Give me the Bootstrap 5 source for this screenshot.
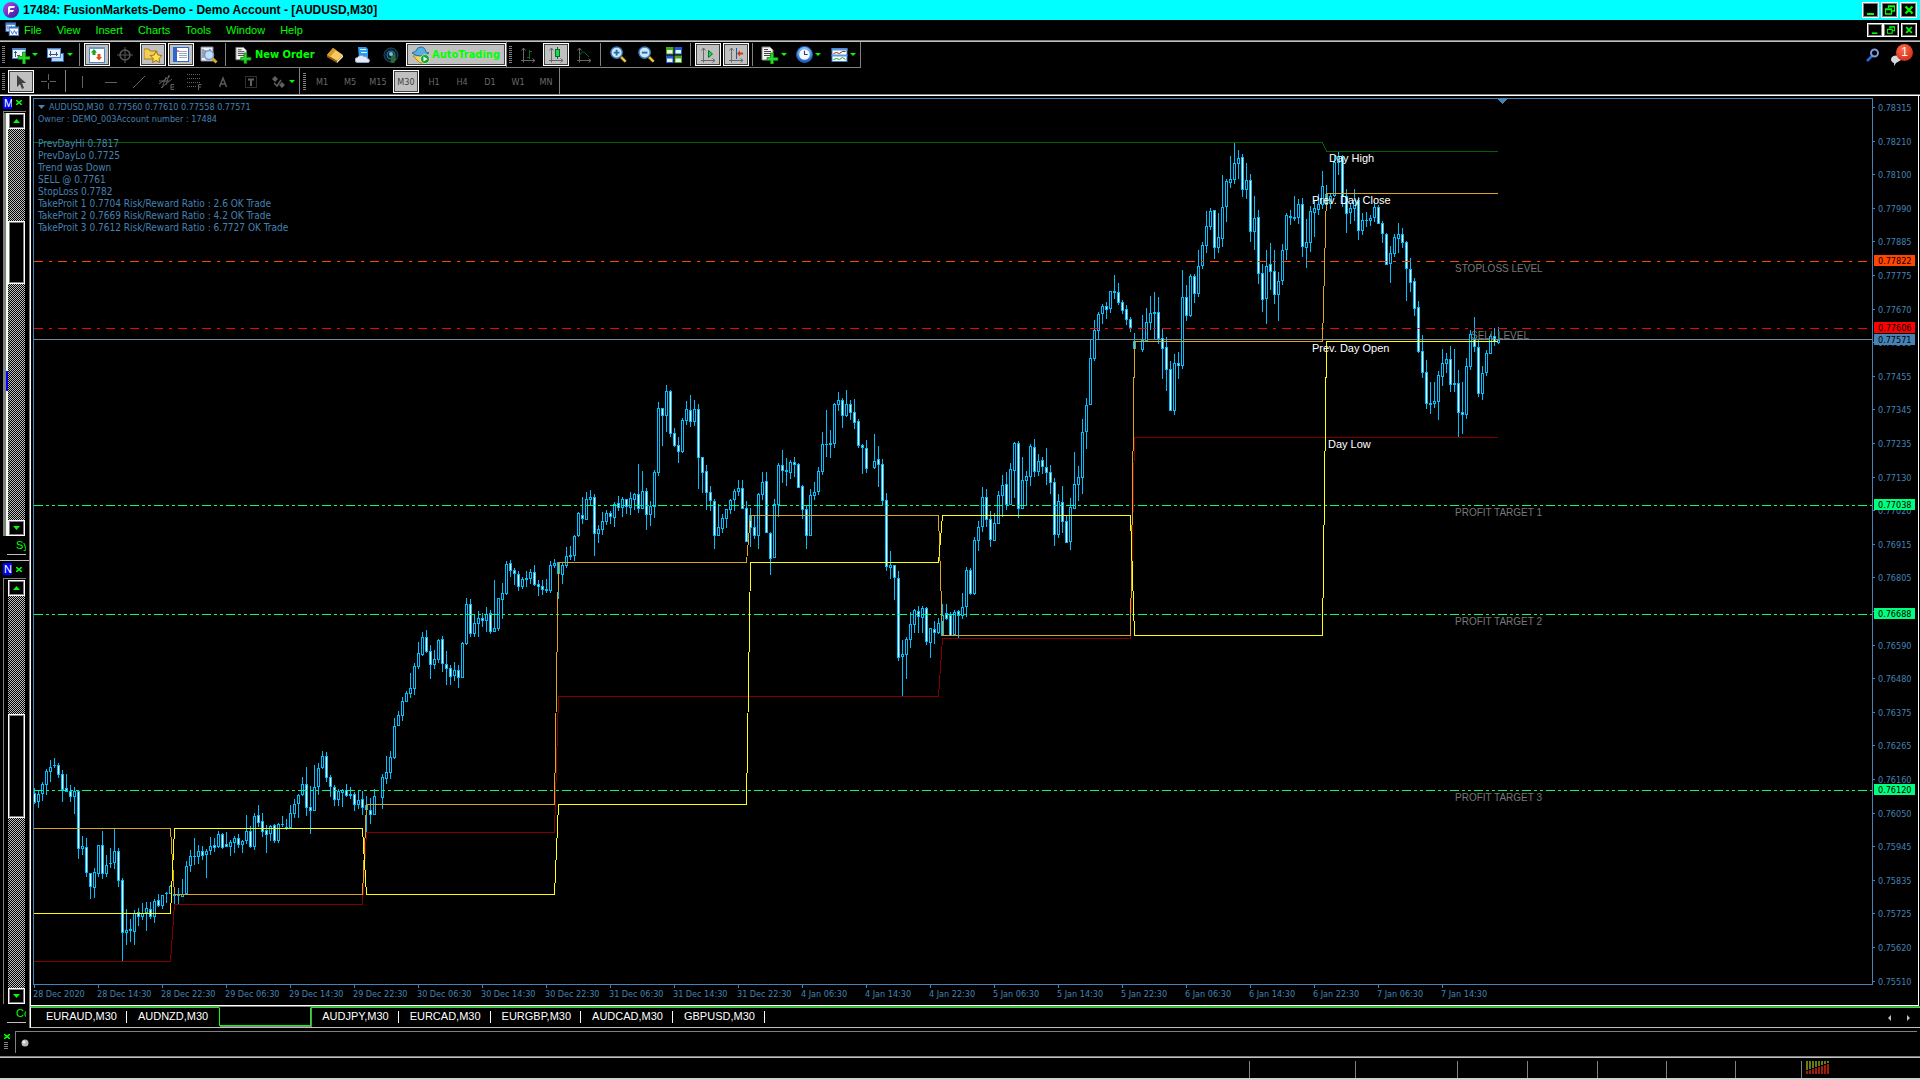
<!DOCTYPE html>
<html lang="en">
<head>
<meta charset="utf-8">
<meta name="viewport" content="width=device-width, initial-scale=1">
<title>17484: FusionMarkets-Demo - Demo Account - [AUDUSD,M30]</title>
<link href="https://cdn.jsdelivr.net/npm/bootstrap@5.3.0/dist/css/bootstrap.min.css" rel="stylesheet">
<style>
:root{--lime:#00ff00;--steel:#4682b4;--face:#c0c0c0;--shade:#808080}
body{background:#000;color:#fff;font-family:"Liberation Sans",Arial,sans-serif;font-size:11px;line-height:14px}
.tiny{font-family:"DejaVu Sans Condensed","DejaVu Sans",sans-serif;font-size:9px;line-height:12px}
.btn{--bs-btn-line-height:1;color:inherit;font-size:11px;line-height:14px}
svg{display:block;flex:none}
/* title and menu */
.titlebar{height:20px;background:#00ffff;color:#000;font-size:12px;font-weight:700;padding:0 3px}
.winbtns{gap:2px}
.menubar{height:22px;border-bottom:1px solid var(--face);box-shadow:inset 0 -1px var(--shade);padding:0 3px 2px 5px}
.menubar a{color:var(--lime);text-decoration:none}
.menulinks{gap:15px}
.winbtn{width:17px;height:16px;background:#000;border:1px solid #fff;box-shadow:inset 0 0 0 1px var(--shade)}
.winbtn-sm{width:16px;height:14px}
/* toolbars */
.tools{height:26px}
.tools2{height:28px;border-bottom:1px solid #fff;box-shadow:inset 0 -1px var(--shade)}
.toolgroup{gap:2px;padding:1px 0;border-right:1px solid var(--shade)}
.tools .toolgroup{border-bottom:1px solid var(--shade)}
.tools2 .toolgroup{padding:2px 0 3px}
.tools2 .toolgroup+.toolgroup{padding-left:1px}
.grip{width:6px;margin:3px 0 2px;background:repeating-linear-gradient(#808080 0 1px,#000 1px 2px) 2px 0/3px 100% no-repeat}
.rule{width:4px;background:linear-gradient(#808080,#808080) 1px 0/1px 100% no-repeat}
.tool{width:26px;height:23px}
.tool-dd{width:33px;gap:2px}
.pressed{background:var(--face);border:1px solid #fff;box-shadow:inset 0 0 0 1px #404040}
.tooltext{font:bold 11px/14px "DejaVu Sans Condensed","DejaVu Sans",sans-serif;color:var(--lime)}
.neworder{width:90px;height:23px;gap:3px;padding-left:5px}
.autotrade{width:100px;height:23px;gap:2px}
.period{font-family:"DejaVu Sans Condensed","DejaVu Sans",sans-serif;font-size:9px;color:#6a6a6a}
.tools2 .btn{color:#6a6a6a}
.tools2 .pressed{color:#404040}
.bellcount{top:1px;left:6px;width:17px;height:17px;border-radius:9px;background:radial-gradient(circle at 40% 30%,#ff6a4a,#c81e0c);font-size:12px;line-height:17px}
.corner{gap:10px}
/* dock */
.dock{width:29px}
.pane-a{flex:464 1 0}
.pane-b{flex:467 1 0;border-top:1px solid var(--face)}
.panehead{height:15px;padding:0 0 2px 3px}
.pane-b .panehead{height:17px;padding-bottom:1px}
.panehead span{width:9px;height:12px;background:#0000ff;line-height:12px;overflow:hidden;padding-left:1px}
.panebody{border-left:1px solid var(--shade);border-top:1px solid var(--shade);margin:0 3px 0 3px;padding-top:1px}
.liststrip{width:4px;border-left:2px solid var(--shade);background:#f0fff0;position:relative}
.pane-b .liststrip{background:#000;border-color:#000}
.liststrip i{position:absolute;left:0;width:2px;top:61%;height:20px;background:#0000ff}
.scroller{width:17px}
.arrowbtn{height:16px;background:#000;border:1px solid #fff;box-shadow:inset 0 0 0 1px var(--shade)}
.track{background:repeating-conic-gradient(#000 0 25%,#c0c0c0 0 50%) 0 0/2px 2px}
.thumb{background:#000;border:1px solid #fff;box-shadow:inset 0 0 0 1px var(--shade)}
.panetab{height:19px;margin:0 3px 5px 7px;padding:2px 0 0 9px;border-bottom:1px solid var(--face);color:var(--lime);overflow:hidden}
/* chart window */
.mdi{border-left:1px solid var(--shade);min-width:0}
.frame{border-left:1px solid #fff;border-bottom:1px solid #fff;border-right:1px solid #fff;padding:2px 0 0 2px;margin-right:1px}
.plot{border:1px solid var(--steel);min-height:0;overflow:hidden}
.canvas{width:100%;height:100%}
#prices{overflow:visible}
.price{width:45px}
.timeaxis{height:20px}
.info{top:2px;left:4px;color:var(--steel)}
.info p{margin:0;white-space:pre}
.info .notes{font-size:10px;margin-top:13px}
.tabs{height:22px;border-top:1px solid var(--shade);border-bottom:1px solid var(--face);border-left:1px solid #fff}
.tabline{border-top:1px solid var(--lime)}
.tabrow{padding-left:4px}
.tabs .tabbtn{padding:0 9px 0 11px;height:17px;line-height:15px}
.tabsep{width:1px;height:12px;background:#fff;margin-top:3px}
.tabs .active-tab{width:92px;height:19px;margin:-1px 0 0 2px;background:#000;border:1px solid var(--lime);border-top-color:#000;box-shadow:1px 1px var(--shade)}
.tabscroll{padding-right:10px}
/* terminal and status */
.terminal{height:30px;padding-top:3px;border-bottom:1px solid var(--face);box-shadow:inset 0 -1px var(--shade)}
.termhead{width:15px;padding:3px 0 0 4px}
.termgrip{width:4px;height:8px;margin-top:3px;background:repeating-linear-gradient(#808080 0 1px,#000 1px 2px)}
.termbody{border-left:1px solid var(--shade);border-top:1px solid var(--shade);margin:0 3px 4px 0;padding:7px 0 0 5px}
.status{height:22px;padding-top:3px;border-bottom:2px solid #d0d0d0}
.cell-s{border-left:1px solid var(--shade)}
.w106{width:106px}.w102{width:102px}.w70{width:70px}.w69{width:69px}.w66{width:66px}.w119{width:119px}
</style>
<script src="https://cdn.jsdelivr.net/npm/bootstrap@5.3.0/dist/js/bootstrap.bundle.min.js"></script>
</head>
<body class="vh-100 d-flex flex-column overflow-hidden">

<svg width="0" height="0" class="position-absolute" aria-hidden="true">
<defs>
<linearGradient id="gPurple" x2="1" y2="1"><stop stop-color="#b04df0"/><stop offset="1" stop-color="#3a1490"/></linearGradient>
<linearGradient id="gBlue" y2="1" x2="0"><stop stop-color="#8cc4f4"/><stop offset="1" stop-color="#1a5fc4"/></linearGradient>
<symbol id="i-logo" viewBox="0 0 16 16"><circle cx="8" cy="8" r="8" fill="url(#gPurple)"/><path d="M5 13V6q0-2 2-2h5l-1 2H8q-1 0-1 1v1h4l-1 2H7z" fill="#fff"/></symbol>
<symbol id="i-mdi" viewBox="0 0 16 16"><rect x="1" y="1" width="10" height="9" fill="#e8f2ff" stroke="#3a78c8"/><path d="M1 2h10" stroke="#3a78c8" stroke-width="2"/><path d="M3 4v4m2-3v3m2-4v4" stroke="#3a78c8"/><rect x="4.500" y="5.500" width="10" height="9" fill="#fff" stroke="#3a78c8"/><path d="M4 6h11" stroke="#3a78c8" stroke-width="2"/><path d="M6 9l2 4 2-4 2 4 1-3" fill="none" stroke="#3a78c8"/></symbol>
<symbol id="i-newchart" viewBox="0 0 18 18"><rect x=".5" y="2.500" width="13" height="10" fill="#eaf3ff" stroke="#4a86c8"/><path d="M0 3h14" stroke="#4a86c8" stroke-width="2"/><path d="M3.500 5v6M2 6.500h3M5 9.500h3" stroke="#456" fill="none"/><path d="M10.500 6h3v4.500H18v3h-4.500V18h-3v-4.500H6v-3h4.500z" fill="#28d828" stroke="#087808" stroke-width=".7"/></symbol>
<symbol id="i-profiles" viewBox="0 0 18 18"><rect x="4.500" y="7.500" width="12" height="8" fill="#b8d6f8" stroke="#2a68b8"/><rect x=".5" y="2.500" width="13" height="9" fill="#eaf3ff" stroke="#4a86c8"/><path d="M0 3h14" stroke="#4a86c8"/><path d="M3.500 5v5M2 8.500h9M9.500 6v4" stroke="#456"/></symbol>
<symbol id="i-market" viewBox="0 0 16 16"><rect x=".5" y=".5" width="15" height="15" fill="#fff" stroke="#4a86c8"/><path d="M0 1h16" stroke="#69c" stroke-width="2"/><path d="M5 2l3 3.500H6.500V8h-3V5.500H2z" fill="#1aa41a"/><path d="M10 13.500L7 10h1.500V7h3v3H13z" fill="#e84a1a"/></symbol>
<symbol id="i-target" viewBox="0 0 16 16"><circle cx="8" cy="8" r="5" fill="none" stroke="#585858" stroke-width="1.500"/><path d="M8 0v16M0 8h16" stroke="#585858"/></symbol>
<symbol id="i-navig" viewBox="0 0 18 16"><path d="M0 2h5l1 2h7v8H0z" fill="#f4cc58" stroke="#a8801a"/><path d="M12 4l2 4 4 .5-3 3 .8 4-3.800-2-3.500 2 .7-4-3-3 4-.5z" fill="#ffe050" stroke="#a07010"/></symbol>
<symbol id="i-terminal" viewBox="0 0 16 16"><rect x=".5" y=".5" width="15" height="14" fill="#fff" stroke="#2a68d0"/><path d="M2.500 1v13" stroke="#2a68d0" stroke-width="3"/><path d="M6 4.500h8M6 6.500h8M6 8.500h8M6 10.500h8" stroke="#9ab"/><path d="M5 3v2" stroke="#e00"/></symbol>
<symbol id="i-tester" viewBox="0 0 18 18"><path d="M1 1h12v14H1z" fill="#eef" stroke="#889"/><path d="M3 3v9m2-8v6m5-7v6" stroke="#456"/><circle cx="9" cy="9" r="4.500" fill="#bfe0fc" stroke="#7a98b8" stroke-width="1.500"/><path d="M12.500 12.500l4 4" stroke="#d8a820" stroke-width="3"/></symbol>
<symbol id="i-order" viewBox="0 0 18 18"><path d="M1 1h8l3 3v10H1z" fill="#f4f4f4" stroke="#888"/><path d="M3 3.500h4M3 5.500h7M3 7.500h7M3 9.500h7" stroke="#444"/><path d="M9.500 7h3v4.500H17v3h-4.500V18h-3v-3.500H6v-3h3.500z" fill="#28d828" stroke="#087808" stroke-width=".7"/></symbol>
<symbol id="i-book" viewBox="0 0 16 16"><path d="M6 1l10 7-6 6-10-6z" fill="#f8c860"/><path d="M0 8l10 6v2L0 10z" fill="#9a6010"/><path d="M10 14l6-6v2l-6 6z" fill="#fff0c0"/><path d="M6 1L0 8l3 2 6-7z" fill="#d89a28"/></symbol>
<symbol id="i-cloud" viewBox="0 0 16 16"><path d="M3 0h8l2 2v9H4z" fill="#2a9af4"/><path d="M5 2.500h6M6 5.500h6" stroke="#dff"/><path d="M2.500 15.500a2.500 2.500 0 010-5 4 3.500 0 016.500-1 3 3 0 013.500 2 2.200 2.200 0 011 4z" fill="#e4eaf8" stroke="#8aa0c8"/></symbol>
<symbol id="i-signal" viewBox="0 0 16 16"><circle cx="8" cy="8" r="7" fill="#0c2030" stroke="#204868"/><circle cx="8" cy="8" r="4" fill="none" stroke="#307898"/><path d="M8 8v8h3l2-3-1-6z" fill="#2a6a30"/><circle cx="8" cy="7" r="2" fill="#6ac0e8"/></symbol>
<symbol id="i-auto" viewBox="0 0 18 18"><path d="M1 10l7 7 6-1 1-7z" fill="#f4d458" stroke="#b08818"/><path d="M0 7q8 6 17 0l-3-1q-1-5-5-5T4 5z" fill="#58b0e0" stroke="#2a70a0"/><circle cx="13" cy="13" r="4.500" fill="#14a82a" stroke="#fff" stroke-width=".6"/><path d="M11.500 10.500l4 2.500-4 2.500z" fill="#fff"/></symbol>
<symbol id="i-axes" viewBox="0 0 16 16"><path d="M3.500 1v14.500M1 13.500h14M1.500 3.500l2-2.500 2 2.500M12.500 11.500l2.500 2-2.500 2" fill="none" stroke="#686868"/></symbol>
<symbol id="i-zoom" viewBox="0 0 18 18"><path d="M11 11l5.500 5.500" stroke="#806010" stroke-width="3.500"/><path d="M12 12l4.500 4.500" stroke="#f8d040" stroke-width="2"/><circle cx="7" cy="7" r="6" fill="#c8e8fc" stroke="#3a7ab8" stroke-width="1.500"/></symbol>
<symbol id="i-tile" viewBox="0 0 16 16"><path d="M0 0h7.500v7.500H0z" fill="#48a818"/><path d="M8.500 0H16v7.500H8.500z" fill="#2058d8"/><path d="M0 8.500h7.500V16H0z" fill="#2058d8"/><path d="M8.500 8.500H16V16H8.500z" fill="#48a818"/><path d="M1 3h5.500v3.500H1zM9.500 3H15v3.500H9.500zM1 11.500h5.500V15H1zM9.500 11.500H15V15H9.500z" fill="#e8f4e8"/></symbol>
<symbol id="i-clock" viewBox="0 0 16 16"><circle cx="8" cy="8" r="7.500" fill="url(#gBlue)" stroke="#1858b0"/><circle cx="8" cy="8" r="5" fill="#f4f8ff"/><path d="M8 4.500V8h3" fill="none" stroke="#345"/></symbol>
<symbol id="i-template" viewBox="0 0 16 16"><rect x=".5" y="1.500" width="15" height="13" fill="#fff" stroke="#3a78c8"/><path d="M0 2.500h16M0 8.500h16" stroke="#5a9ae0" stroke-width="2"/><path d="M2 6.500l3-1 3 1 3-2h3" stroke="#a02810" fill="none"/><path d="M2 12.500l3-1 3 1 3-2 3 2" stroke="#18a018" fill="none"/></symbol>
<symbol id="i-dd" viewBox="0 0 6 3"><path d="M0 0h6L3 3z" fill="#0f0"/></symbol>
<symbol id="i-up" viewBox="0 0 7 4"><path d="M0 4h7L3.500 0z" fill="#0f0"/></symbol>
<symbol id="i-down" viewBox="0 0 7 4"><path d="M0 0h7L3.500 4z" fill="#0f0"/></symbol>
<symbol id="i-x" viewBox="0 0 6 5"><path d="M0 0l6 5M6 0L0 5" stroke="#0f0" stroke-width="1.600"/></symbol>
<symbol id="i-min" viewBox="0 0 10 10"><path d="M1 8h7v2H1z" fill="#0f0"/></symbol>
<symbol id="i-restore" viewBox="0 0 10 10"><path d="M3.500 3V1h6v5H7M3 1.500h7M1 4.500h6M.5 4h6v5h-6z" fill="none" stroke="#0f0" stroke-width="1.300"/></symbol>
<symbol id="i-close" viewBox="0 0 10 10"><path d="M1.500 1.500l7 7m0-7l-7 7" stroke="#0f0" stroke-width="2.200"/></symbol>
</defs>
</svg>

<header class="titlebar d-flex align-items-center flex-shrink-0">
  <svg width="16" height="16"><use href="#i-logo"/></svg>
  <span class="ms-1 flex-grow-1">17484: FusionMarkets-Demo - Demo Account - [AUDUSD,M30]</span>
  <div class="d-flex winbtns">
    <button class="btn rounded-0 p-0 winbtn d-flex justify-content-center align-items-center" aria-label="Minimize"><svg width="10" height="10"><use href="#i-min"/></svg></button>
    <button class="btn rounded-0 p-0 winbtn d-flex justify-content-center align-items-center" aria-label="Restore"><svg width="10" height="10"><use href="#i-restore"/></svg></button>
    <button class="btn rounded-0 p-0 winbtn d-flex justify-content-center align-items-center" aria-label="Close"><svg width="10" height="10"><use href="#i-close"/></svg></button>
  </div>
</header>

<nav class="menubar d-flex align-items-center flex-shrink-0">
  <svg width="15" height="15"><use href="#i-mdi"/></svg>
  <div class="menulinks d-flex flex-grow-1 ps-1">
    <a href="#">File</a><a href="#">View</a><a href="#">Insert</a><a href="#">Charts</a><a href="#">Tools</a><a href="#">Window</a><a href="#">Help</a>
  </div>
  <div class="d-flex winbtns">
    <div class="d-flex">
      <button class="btn rounded-0 p-0 winbtn winbtn-sm d-flex justify-content-center align-items-center" aria-label="Minimize chart"><svg width="8" height="8"><use href="#i-min"/></svg></button>
      <button class="btn rounded-0 p-0 winbtn winbtn-sm d-flex justify-content-center align-items-center" aria-label="Restore chart"><svg width="8" height="8"><use href="#i-restore"/></svg></button>
    </div>
    <button class="btn rounded-0 p-0 winbtn winbtn-sm d-flex justify-content-center align-items-center" aria-label="Close chart"><svg width="8" height="8"><use href="#i-close"/></svg></button>
  </div>
</nav>

<div class="tools d-flex flex-shrink-0">
  <div class="toolgroup d-flex">
    <div class="grip"></div>
    <button class="btn rounded-0 border-0 p-0 tool tool-dd d-flex align-items-center justify-content-center" aria-label="New chart"><svg width="18" height="18"><use href="#i-newchart"/></svg><svg width="6" height="3"><use href="#i-dd"/></svg></button>
    <button class="btn rounded-0 border-0 p-0 tool tool-dd d-flex align-items-center justify-content-center" aria-label="Profiles"><svg width="18" height="18"><use href="#i-profiles"/></svg><svg width="6" height="3"><use href="#i-dd"/></svg></button>
    <div class="rule"></div>
    <button class="btn rounded-0 p-0 tool pressed d-flex align-items-center justify-content-center" aria-label="Market Watch"><svg width="16" height="16"><use href="#i-market"/></svg></button>
    <button class="btn rounded-0 border-0 p-0 tool d-flex align-items-center justify-content-center" aria-label="Data Window"><svg width="16" height="16"><use href="#i-target"/></svg></button>
    <button class="btn rounded-0 p-0 tool pressed d-flex align-items-center justify-content-center" aria-label="Navigator"><svg width="18" height="16"><use href="#i-navig"/></svg></button>
    <button class="btn rounded-0 p-0 tool pressed d-flex align-items-center justify-content-center" aria-label="Terminal"><svg width="16" height="16"><use href="#i-terminal"/></svg></button>
    <button class="btn rounded-0 border-0 p-0 tool d-flex align-items-center justify-content-center" aria-label="Strategy Tester"><svg width="18" height="18"><use href="#i-tester"/></svg></button>
    <div class="rule"></div>
    <button class="btn rounded-0 border-0 py-0 pe-0 neworder d-flex align-items-center text-nowrap"><svg width="17" height="18"><use href="#i-order"/></svg><span class="tooltext">New Order</span></button>
    <button class="btn rounded-0 border-0 p-0 tool d-flex align-items-center justify-content-center" aria-label="MetaEditor"><svg width="16" height="16"><use href="#i-book"/></svg></button>
    <button class="btn rounded-0 border-0 p-0 tool d-flex align-items-center justify-content-center" aria-label="Cloud"><svg width="16" height="16"><use href="#i-cloud"/></svg></button>
    <button class="btn rounded-0 border-0 p-0 tool d-flex align-items-center justify-content-center" aria-label="Signals"><svg width="16" height="16"><use href="#i-signal"/></svg></button>
    <button class="btn rounded-0 p-0 autotrade pressed d-flex align-items-center justify-content-center text-nowrap"><svg width="18" height="18"><use href="#i-auto"/></svg><span class="tooltext">AutoTrading</span></button>
  </div>
  <div class="toolgroup d-flex">
    <div class="grip"></div>
    <button class="btn rounded-0 border-0 p-0 tool d-flex align-items-center justify-content-center" aria-label="Bar chart"><svg width="16" height="16"><use href="#i-axes"/><path d="M9.500 3v9M7 10.500h2M10 4.500h2" stroke="#0a6a20" fill="none"/></svg></button>
    <button class="btn rounded-0 p-0 tool pressed d-flex align-items-center justify-content-center" aria-label="Candlesticks"><svg width="16" height="16"><use href="#i-axes"/><path d="M9.500 0v12" stroke="#064"/><rect x="7.500" y="2.500" width="4" height="7" fill="#20d850" stroke="#087020"/></svg></button>
    <button class="btn rounded-0 border-0 p-0 tool d-flex align-items-center justify-content-center" aria-label="Line chart"><svg width="16" height="16"><use href="#i-axes"/><path d="M3 9q4-7 7-2l3 3" stroke="#0a6a20" fill="none"/></svg></button>
    <div class="rule"></div>
    <button class="btn rounded-0 border-0 p-0 tool d-flex align-items-center justify-content-center" aria-label="Zoom in"><svg width="17" height="17" viewBox="0 0 18 18"><use href="#i-zoom"/><path d="M7 4v6M4 7h6" stroke="#2868b0" stroke-width="2"/></svg></button>
    <button class="btn rounded-0 border-0 p-0 tool d-flex align-items-center justify-content-center" aria-label="Zoom out"><svg width="17" height="17" viewBox="0 0 18 18"><use href="#i-zoom"/><path d="M4 7h6" stroke="#2868b0" stroke-width="2"/></svg></button>
    <button class="btn rounded-0 border-0 p-0 tool d-flex align-items-center justify-content-center" aria-label="Tile windows"><svg width="16" height="16"><use href="#i-tile"/></svg></button>
    <div class="rule"></div>
    <button class="btn rounded-0 p-0 tool pressed d-flex align-items-center justify-content-center" aria-label="Auto scroll"><svg width="16" height="16"><use href="#i-axes"/><path d="M8.500 3.500v7l4-3.500z" fill="#20d850" stroke="#087020"/></svg></button>
    <button class="btn rounded-0 p-0 tool pressed d-flex align-items-center justify-content-center" aria-label="Chart shift"><svg width="16" height="16"><use href="#i-axes"/><path d="M8.500 1v11" stroke="#1858b0"/><path d="M9 6.500l3-3v2h3v2h-3v2z" fill="#d83808"/></svg></button>
    <div class="rule"></div>
    <button class="btn rounded-0 border-0 p-0 tool tool-dd d-flex align-items-center justify-content-center" aria-label="Indicators"><svg width="18" height="18"><use href="#i-order"/></svg><svg width="6" height="3"><use href="#i-dd"/></svg></button>
    <button class="btn rounded-0 border-0 p-0 tool tool-dd d-flex align-items-center justify-content-center" aria-label="Periods"><svg width="17" height="17"><use href="#i-clock"/></svg><svg width="6" height="3"><use href="#i-dd"/></svg></button>
    <button class="btn rounded-0 border-0 p-0 tool tool-dd d-flex align-items-center justify-content-center" aria-label="Templates"><svg width="17" height="16"><use href="#i-template"/></svg><svg width="6" height="3"><use href="#i-dd"/></svg></button>
  </div>
  <div class="corner ms-auto d-flex align-items-center pe-2">
    <button class="btn rounded-0 border-0 p-0" aria-label="Search"><svg width="14" height="14"><path d="M1 13l6-6" stroke="#2a68d8" stroke-width="2.500"/><circle cx="8.500" cy="5" r="3.500" fill="none" stroke="#7a9ad8" stroke-width="2"/></svg></button>
    <button class="btn rounded-0 border-0 p-0 position-relative" aria-label="Notifications"><svg width="22" height="24"><path d="M1 16a5 4 0 1110 1l-5 3-2 3v-3q-3-1-3-4z" fill="#d8d8e0"/></svg><span class="bellcount position-absolute text-white text-center">1</span></button>
  </div>
</div>

<div class="tools2 d-flex flex-shrink-0">
  <div class="toolgroup d-flex">
    <div class="grip"></div>
    <button class="btn rounded-0 p-0 tool pressed d-flex align-items-center justify-content-center" aria-label="Cursor"><svg width="12" height="16"><path d="M2 1v12l3-3 2 5 2-1-2-5h4z" fill="#404040"/></svg></button>
    <button class="btn rounded-0 border-0 p-0 tool d-flex align-items-center justify-content-center" aria-label="Crosshair"><svg width="16" height="16"><path d="M7.500 0v6m0 3v6M0 7.500h6m3 0h6" stroke="#606060"/></svg></button>
    <div class="rule"></div>
    <button class="btn rounded-0 border-0 p-0 tool d-flex align-items-center justify-content-center" aria-label="Vertical line"><svg width="14" height="14"><path d="M6.500 1v12" stroke="#606060"/></svg></button>
    <button class="btn rounded-0 border-0 p-0 tool d-flex align-items-center justify-content-center" aria-label="Horizontal line"><svg width="14" height="14"><path d="M1 7.500h12" stroke="#606060"/></svg></button>
    <button class="btn rounded-0 border-0 p-0 tool d-flex align-items-center justify-content-center" aria-label="Trendline"><svg width="14" height="14"><path d="M1 13L13 1" stroke="#606060"/></svg></button>
    <button class="btn rounded-0 border-0 p-0 tool d-flex align-items-center justify-content-center" aria-label="Channel"><svg width="18" height="17"><path d="M1 11L12 3M3 15L14 6M4 15L8 4M8 12L11 2M1 8l10 0" stroke="#606060" fill="none"/><path d="M16 11.500h-3v5h3M13 14h3" stroke="#606060" fill="none"/></svg></button>
    <button class="btn rounded-0 border-0 p-0 tool d-flex align-items-center justify-content-center" aria-label="Fibonacci"><svg width="18" height="17"><path d="M1 1.500h14M1 5.500h14M1 9.500h14M1 13.500h9" stroke="#606060" stroke-dasharray="1 1"/><path d="M12.500 17v-5.500h3M12 14h3" stroke="#606060" fill="none"/></svg></button>
    <button class="btn rounded-0 border-0 p-0 tool d-flex align-items-center justify-content-center" aria-label="Text"><svg width="14" height="14"><path d="M3.500 12L7 3l3.500 9M5 9h4" stroke="#5a5a5a" fill="none" stroke-width="1.500"/></svg></button>
    <button class="btn rounded-0 border-0 p-0 tool d-flex align-items-center justify-content-center" aria-label="Text label"><svg width="14" height="14"><rect x="1.500" y="1.500" width="11" height="11" fill="none" stroke="#606060" stroke-dasharray="1 1"/><path d="M4 4.500h6M7 4v7" stroke="#606060" stroke-width="2"/></svg></button>
    <button class="btn rounded-0 border-0 p-0 tool tool-dd d-flex align-items-center justify-content-center" aria-label="Arrows"><svg width="16" height="14"><path d="M4 1l3 3-3 3-3-3zM11 7l3 3-3 3-3-3z" fill="#606060"/><path d="M3 8l3 3 4-6" stroke="#606060" fill="none" stroke-width="1.500"/></svg><svg width="6" height="3"><use href="#i-dd"/></svg></button>
  </div>
  <div class="toolgroup d-flex">
    <div class="grip"></div>
    <button class="btn rounded-0 border-0 p-0 tool period">M1</button>
    <button class="btn rounded-0 border-0 p-0 tool period">M5</button>
    <button class="btn rounded-0 border-0 p-0 tool period">M15</button>
    <button class="btn rounded-0 p-0 tool period pressed">M30</button>
    <button class="btn rounded-0 border-0 p-0 tool period">H1</button>
    <button class="btn rounded-0 border-0 p-0 tool period">H4</button>
    <button class="btn rounded-0 border-0 p-0 tool period">D1</button>
    <button class="btn rounded-0 border-0 p-0 tool period">W1</button>
    <button class="btn rounded-0 border-0 p-0 tool period">MN</button>
  </div>
</div>

<main class="d-flex flex-grow-1 overflow-hidden">
  <aside class="dock d-flex flex-column flex-shrink-0">
    <section class="pane-a d-flex flex-column">
      <div class="panehead d-flex align-items-center"><span>M</span><svg class="ms-1" width="6" height="5"><use href="#i-x"/></svg></div>
      <div class="panebody d-flex flex-grow-1">
        <div class="liststrip"><i></i></div>
        <div class="scroller d-flex flex-column">
          <button class="btn rounded-0 p-0 arrowbtn d-flex align-items-center justify-content-center" aria-label="Scroll up"><svg width="7" height="4"><use href="#i-up"/></svg></button>
          <div class="track" style="flex:93 1 0"></div><div class="thumb" style="flex:61 1 0"></div><div class="track" style="flex:238 1 0"></div>
          <button class="btn rounded-0 p-0 arrowbtn d-flex align-items-center justify-content-center" aria-label="Scroll down"><svg width="7" height="4"><use href="#i-down"/></svg></button>
        </div>
      </div>
      <div class="panetab">Sy</div>
    </section>
    <section class="pane-b d-flex flex-column">
      <div class="panehead d-flex align-items-center"><span>N</span><svg class="ms-1" width="6" height="5"><use href="#i-x"/></svg></div>
      <div class="panebody d-flex flex-grow-1">
        <div class="liststrip"></div>
        <div class="scroller d-flex flex-column">
          <button class="btn rounded-0 p-0 arrowbtn d-flex align-items-center justify-content-center" aria-label="Scroll up"><svg width="7" height="4"><use href="#i-up"/></svg></button>
          <div class="track" style="flex:118 1 0"></div><div class="thumb" style="flex:102 1 0"></div><div class="track" style="flex:170 1 0"></div>
          <button class="btn rounded-0 p-0 arrowbtn d-flex align-items-center justify-content-center" aria-label="Scroll down"><svg width="7" height="4"><use href="#i-down"/></svg></button>
        </div>
      </div>
      <div class="panetab">Co</div>
    </section>
  </aside>

  <div class="mdi d-flex flex-column flex-grow-1">
    <div class="frame d-flex flex-column flex-grow-1 overflow-hidden">
      <div class="d-flex flex-grow-1 overflow-hidden">
        <div class="plot flex-grow-1 position-relative">
          <svg id="chart" class="canvas" shape-rendering="crispEdges"></svg>
          <div class="info tiny position-absolute">
            <p class="d-flex align-items-center"><svg class="me-1" width="7" height="4"><path d="M0 0h7L3.500 4z" fill="#4682b4"/></svg>AUDUSD,M30  0.77560 0.77610 0.77558 0.77571</p>
            <p>Owner : DEMO_003Account number : 17484</p>
            <div class="notes">
              <p>PrevDayHi 0.7817</p>
              <p>PrevDayLo 0.7725</p>
              <p>Trend was Down</p>
              <p>SELL @ 0.7761</p>
              <p>StopLoss 0.7782</p>
              <p>TakeProit 1 0.7704 Risk/Reward Ratio : 2.6 OK Trade</p>
              <p>TakeProit 2 0.7669 Risk/Reward Ratio : 4.2 OK Trade</p>
              <p>TakeProit 3 0.7612 Risk/Reward Ratio : 6.7727 OK Trade</p>
            </div>
          </div>
        </div>
        <div class="price flex-shrink-0"><svg id="prices" class="tiny canvas"></svg></div>
      </div>
      <div class="timeaxis flex-shrink-0"><svg id="times" class="tiny canvas"></svg></div>
    </div>
    <div class="tabs flex-shrink-0 d-flex">
      <div class="tabline flex-grow-1 d-flex">
        <div class="tabrow d-flex flex-grow-1">
          <button class="btn rounded-0 border-0 tabbtn">EURAUD,M30</button><div class="tabsep"></div>
          <button class="btn rounded-0 border-0 tabbtn">AUDNZD,M30</button>
          <button class="btn rounded-0 active-tab" aria-label="AUDUSD,M30"></button>
          <button class="btn rounded-0 border-0 tabbtn">AUDJPY,M30</button><div class="tabsep"></div>
          <button class="btn rounded-0 border-0 tabbtn">EURCAD,M30</button><div class="tabsep"></div>
          <button class="btn rounded-0 border-0 tabbtn">EURGBP,M30</button><div class="tabsep"></div>
          <button class="btn rounded-0 border-0 tabbtn">AUDCAD,M30</button><div class="tabsep"></div>
          <button class="btn rounded-0 border-0 tabbtn">GBPUSD,M30</button><div class="tabsep"></div>
        </div>
        <div class="tabscroll d-flex align-items-center gap-3">
          <button class="btn rounded-0 border-0 p-0" aria-label="Previous tabs"><svg width="3" height="6"><path d="M3 0v6L0 3z" fill="#c0c0c0"/></svg></button>
          <button class="btn rounded-0 border-0 p-0" aria-label="Next tabs"><svg width="3" height="6"><path d="M0 0v6l3-3z" fill="#c0c0c0"/></svg></button>
        </div>
      </div>
    </div>
  </div>
</main>

<section class="terminal d-flex flex-shrink-0">
  <div class="termhead"><svg width="6" height="5"><use href="#i-x"/></svg><div class="termgrip"></div></div>
  <div class="termbody flex-grow-1"><svg width="8" height="8"><circle cx="4" cy="4" r="3.500" fill="#b8b8b8"/><circle cx="3" cy="3" r="1.500" fill="#f0f0f0"/></svg></div>
</section>

<footer class="status d-flex justify-content-end flex-shrink-0">
  <div class="cell-s w106"></div><div class="cell-s w102"></div><div class="cell-s w70"></div><div class="cell-s w70"></div><div class="cell-s w69"></div><div class="cell-s w69"></div><div class="cell-s w66"></div>
  <div class="cell-s w119 ps-1"><svg id="bars" width="24" height="13" shape-rendering="crispEdges"></svg></div>
</footer>

<script>
// Bars: high, body top, body bottom, low, falling(1)/rising(0), in thirds of a pixel below each block's top.
const blocks = [
 {top:631, bars:`174 188 220 222 1;184 191 215 234 0;155 162 192 212 0;116 123 165 195 0;90 110 126 156 0;84 105 109 114 0;98 105 135 144 1;120 132 180 216 1;132 175 186 187 1;165 182 200 216 1;170 183 200 252 0;180 183 358 387 1;318 347 358 375 0;324 351 428 441 1;429 430 471 507 1;413 426 474 504 0;345 346 431 441 0;303 345 432 447 1;375 405 432 441 0;353 398 402 414 0;296 363 400 416 0;354 363 452 471 1;444 450 608 692 1;537 600 608 645 0;566 598 603 636 0;540 549 605 645 0;534 546 560 588 1;519 549 560 570 0;516 534 549 603 0;516 537 560 567 1;507 513 560 579 0;492 510 528 530 1;495 496 527 536 0;486 488 492 518 0;464 467 491 492 0;480 493 498 522 0;474 494 498 522 0;447 493 500 502 0;393 408 493 494 0;360 378 408 426 0;323 378 382 405 0;345 363 381 402 0;348 363 378 390 1;357 363 374 444 0;321 348 363 375 0;324 345 353 365 1;303 313 352 354 0;309 312 354 357 1;306 342 350 351 1;330 336 350 378 0;317 324 339 368 0;312 324 345 354 1;330 333 344 368 0;255 303 333 341 0;288 303 350 354 1;249 258 350 360 0;225 255 279 291 1;249 273 306 321 1;285 300 315 369 1;285 288 312 333 0;282 286 333 339 1;280 281 332 339 0;258 281 284 290 0;267 290 297 300 1;225 249 293 295 0;207 222 251 264 0;192 195 223 264 0;141 162 196 198 0;110 162 234 258 1;168 230 242 312 1;104 170 242 243 0;99 114 171 195 0;63 78 114 116 0;66 78 144 156 1;134 141 171 201 1;165 171 210 228 1;177 182 210 228 0`},
 {top:441, bars:`746 750 759 801 0;732 750 768 771 1;741 762 768 777 0;756 762 795 813 1;753 780 795 807 0;753 777 804 825 1;768 795 810 876 1;774 810 825 852 1;747 768 825 825 0;-;702 711 774 807 0;648 696 717 732 0;633 651 699 717 0;534 558 654 657 0;513 525 558 558 0;471 483 528 543 0;453 459 486 486 0;399 444 462 474 0;369 378 447 465 0;306 339 381 387 0;276 291 345 348 0;270 291 336 339 1;315 333 375 417 1;330 357 375 387 0;297 300 360 369 0;288 297 372 396 1;333 372 387 435 1;375 384 411 435 1;366 390 408 423 0;375 390 414 444 1;306 309 414 414 0;174 192 312 315 0;177 192 282 291 1;223 249 282 291 0;213 234 252 291 0;219 234 243 261 1;201 222 243 276 0;210 219 276 282 1;120 264 276 276 0;174 174 267 273 0;129 159 180 237 0;63 72 162 165 0;60 69 93 111 1;84 90 102 135 1;93 102 141 153 1;111 117 141 147 0;93 114 120 141 0;87 96 117 132 0;75 96 135 138 1;120 132 141 168 1;120 138 150 165 1;117 147 153 159 0;63 75 153 159 0;57 69 78 84 0;66 66 102 177 0`},
 {top:261, bars:`606 615 645 672 0;561 588 618 624 0;558 585 591 600 0;525 528 588 603 0;456 459 528 531 0;411 465 477 492 1;396 417 480 480 0;390 411 420 435 0;402 411 522 588 1;495 507 522 549 0;456 483 510 525 0;450 459 486 495 0;453 459 471 492 1;426 432 474 501 0;408 429 444 453 1;411 417 444 471 0;417 417 441 462 1;396 414 444 465 0;399 402 420 450 0;312 402 447 459 1;333 393 447 447 0;384 393 465 510 1;423 438 465 498 0;330 336 441 474 0;126 144 339 348 0;144 144 168 258 1;75 93 168 216 0;90 93 222 231 1;204 219 258 261 1;231 255 276 309 1;174 180 276 279 0;123 147 183 195 0;105 150 186 201 1;120 147 186 198 0;132 147 294 387 1;291 291 339 399 1;315 333 399 450 1;378 396 423 453 1;417 423 528 567 1;432 501 528 528 0;462 474 507 519 0;447 447 477 504 0;417 420 450 462 0;387 393 420 453 0;360 384 396 408 0;360 384 447 447 1;423 444 546 546 1;444 465 504 561 1;468 501 528 537 1;399 402 528 567 0;336 366 405 420 0;336 363 519 519 1;516 519 597 645 1;417 432 594 594 0;309 315 435 471 0;270 315 333 369 1;294 330 336 378 0;300 306 339 357 0;291 306 315 351 1;309 312 384 384 1;375 378 450 477 1;438 447 528 567 1;387 405 528 528 0;366 396 408 420 0;321 333 396 405 0;216 252 336 345 0;150 252 255 291 0;210 249 255 294 0;129 132 252 264 0;96 120 135 153 0;114 120 168 204 1;90 132 168 171 0;120 132 159 180 1;117 156 189 207 1;177 183 258 264 1;252 255 264 342 1;240 264 327 339 1;-;222 303 324 327 0;258 297 315 381 1;297 312 423 438 1;399 420 621 633 1;573 615 624 657 0;615 615 654 720 1;633 654 894 903 1;840 882 891 1008 0;831 837 885 957 0;756 792 840 864 0;747 750 795 819 0;738 753 771 819 1`},
 {top:161, bars:`1038 1044 1074 1119 0;1041 1044 1146 1155 1;1104 1104 1149 1194 0;1083 1107 1119 1152 1;1074 1089 1119 1122 0;1032 1065 1128 1128 0;1032 1059 1077 1080 1;1056 1065 1128 1128 1;1050 1056 1125 1128 0;1050 1053 1068 1134 1;999 1041 1068 1077 0;921 930 1041 1071 0;924 930 1002 1005 1;831 840 1002 1005 0;783 801 843 873 0;681 711 801 816 0;687 711 780 801 1;753 777 840 861 1;759 789 843 843 0;693 705 792 792 0;645 675 708 771 0;636 672 735 750 1;609 627 735 735 0;546 549 633 714 0;543 549 747 774 1;591 660 747 747 0;633 648 663 738 0;552 558 651 678 0;537 561 636 651 1;582 603 636 648 0;591 600 621 642 1;564 621 639 675 1;615 636 669 702 1;654 666 825 858 1;702 723 825 834 0;678 726 786 819 1;768 783 849 849 1;714 741 846 870 0;576 672 747 747 0;618 651 675 723 0;477 516 654 702 0;414 435 516 567 0;240 294 435 435 0;180 210 297 303 0;156 162 213 240 0;132 138 162 192 0;126 138 150 177 1;93 93 147 159 0;45 93 99 117 0;69 96 129 135 1;120 126 153 162 1;135 147 180 195 1;171 177 204 216 1;219 243 267 267 0;-;165 240 270 276 0;144 186 243 243 0;108 159 189 210 0;96 156 162 237 0;111 156 237 252 1;204 234 267 357 1;231 261 330 393 1;303 327 453 453 1;282 309 453 465 0;276 309 318 357 1;30 111 318 327 0`},
 {top:31, bars:`465 501 559 573 1;432 438 558 561 0;432 438 492 519 1;360 408 492 501 0;336 345 408 417 0;243 288 348 369 0;234 243 291 300 0;240 240 354 387 1;249 321 354 369 0;135 231 327 351 0;147 153 231 276 0;78 147 159 174 0;39 99 150 162 0;60 84 102 147 0`},
 {top:21, bars:`102 111 210 231 1;129 180 210 237 0;162 180 336 366 1;228 294 336 390 0;270 291 462 492 1;432 459 540 576 1;390 438 537 612 0;369 432 456 510 1;390 453 525 552 1;456 483 525 603 0;372 390 483 495 0;279 285 390 420 0;270 288 294 315 0;228 291 297 303 0;237 252 294 312 0;234 252 381 411 1;297 366 384 444 0;258 273 369 396 0;243 264 279 351 0;222 252 270 285 0;153 198 255 267 0;195 222 255 255 0;219 228 252 267 0;108 126 228 231 0;96 108 129 165 0;105 108 231 261 1;207 228 282 339 1;249 264 279 312 0;207 240 267 303 0;231 240 333 360 1;279 300 333 345 0;276 300 303 321 0;285 294 303 318 0;246 261 294 306 0;255 261 312 312 1;303 309 342 369 1;339 342 435 435 1;378 399 432 489 0;342 351 402 411 0;309 342 357 399 0;324 342 369 384 1;363 366 447 543 1;414 447 489 516 1;474 483 567 588 1;543 561 696 699 1;645 693 759 774 1;720 756 852 867 1;786 849 855 882 0;786 843 852 864 0;753 765 846 900 0;687 729 771 798 0;699 717 732 759 0;678 717 795 816 1;687 789 795 816 0;750 789 879 951 1;786 876 885 942 1;714 738 885 897 0;630 642 741 750 0;591 657 681 696 1;660 681 822 831 1;738 759 822 840 0;690 699 759 768 0;642 648 702 702 0;624 648 666 678 1;621 660 669 672 0`}
];
let wick = '', white = '', black = '', i = 0;
const box = (x, y, w, h) => h > 0 ? `M${x} ${y}h${w}v${h}h${-w}z` : '';
for (const blk of blocks) for (const bar of blk.bars.split(';')) {
  const x = 4 * i++;
  if (bar === '-') continue;
  const [h, t, b, l, falling] = bar.split(' ').map(Number);
  const y = v => blk.top + Math.round(v / 3);
  wick += box(x, y(h), 1, y(l) - y(h)) + box(x - 1, y(t), 3, Math.max(1, y(b) - y(t)));
  const inner = box(x, y(t) + 1, 1, y(b) - y(t) - 2);
  if (falling) white += inner; else black += inner;
}

// Daily levels: one step per trading day, joined over one bar.
const days = [-1, 140, 332, 524, 716, 908, 1100, 1292];
const step = (values, color) => {
  let p = '';
  values.forEach((v, d) => { const end = d < 7 ? days[d + 1] - 4 : 1463; p += `${days[d] + .5},${v}.5 ${end}.5,${v}.5 `; });
  return `<polyline points="${p}" fill="none" stroke="${color}"/>`;
};
const level = (y, color, dash) => `<line x1="0" x2="100%" y1="${y}.5" y2="${y}.5" stroke="${color}" stroke-dasharray="${dash}"/>`;
const label = (x, y, s, c, size) => `<text x="${x}" y="${y}" fill="${c}" font-size="${size}">${s}</text>`;
const grey = '#787878', dot1 = '9 6 3 6', dot2 = '9 3 3 3 3 3';
document.getElementById('chart').innerHTML =
  level(240, '#778899', 'none') +
  `<path d="${wick}" fill="#00bfff"/><path d="${black}" fill="#000"/><path d="${white}" fill="#fff"/>` +
  level(162, '#ff4500', dot1) + level(229, '#ff0000', dot1) +
  level(406, '#00ff7f', dot2) + level(515, '#00ff7f', dot2) + level(691, '#00ff7f', dot2) +
  step([43, 43, 43, 43, 43, 43, 43, 52], '#006400') +
  step([862, 805, 733, 597, 597, 539, 338, 338], '#800000') +
  step([729, 795, 705, 463, 416, 536, 242, 94], '#daa520') +
  step([814, 729, 795, 705, 463, 416, 536, 242], '#ffff00') +
  `<path d="M0 729.5h136.5M140.500 795.500h188M332.500 705.500h188M524.500 463.500h188M716.500 416.500h188M908.500 536.500h188M1100.500 242.500h188" stroke="#daa520"/>` +
  `<path d="M1463 0h10l-5 5z" fill="#4682b4"/>` +
  label(1421, 173, 'STOPLOSS LEVEL', grey, 10) + label(1437, 240, 'SELL LEVEL', grey, 10) +
  label(1421, 417, 'PROFIT TARGET 1', grey, 10) + label(1421, 526, 'PROFIT TARGET 2', grey, 10) + label(1421, 702, 'PROFIT TARGET 3', grey, 10) +
  label(1295, 63, 'Day High', '#fff', 11) + label(1278, 105, 'Prev. Day Close', '#fff', 11) +
  label(1278, 253, 'Prev. Day Open', '#fff', 11) + label(1294, 349, 'Day Low', '#fff', 11);

const ticks = '0.78315 0.78210 0.78100 0.77990 0.77885 0.77775 0.77670 0.77560 0.77455 0.77345 0.77235 0.77130 0.77020 0.76915 0.76805 0.76700 0.76590 0.76480 0.76375 0.76265 0.76160 0.76050 0.75945 0.75835 0.75725 0.75620 0.75510'.split(' ');
let s = '';
ticks.forEach((t, k) => { const y = 9 + Math.round(33.6 * k); s += `<path d="M0 ${y}.5h2" stroke="#4682b4"/>` + `<text x="5" y="${y + 4}" fill="#4682b4">${t}</text>`; });
[[157, '#ff4500', '0.77822'], [224, '#ff0000', '0.77606'], [236, '#4682b4', '0.77571'], [401, '#00ff7f', '0.77038'], [510, '#00ff7f', '0.76688'], [686, '#00ff7f', '0.76120']]
  .forEach(([y, c, t]) => s += `<rect x="1" y="${y}" width="41" height="11" fill="${c}"/><text x="5" y="${y + 9}">${t}</text>`);
document.getElementById('prices').innerHTML = s;

const times = ['28 Dec 2020', '28 Dec 14:30', '28 Dec 22:30'];
['29 Dec', '30 Dec', '31 Dec', '4 Jan', '5 Jan', '6 Jan', '7 Jan'].forEach(d => ['06:30', '14:30', '22:30'].forEach(h => times.push(d + ' ' + h)));
times.pop();
document.getElementById('times').innerHTML = times.map((t, k) => `<path d="M${64 * k + 1}.5 0v3" stroke="#4682b4"/><text x="${64 * k}" y="12" fill="#4682b4">${t}</text>`).join('');

let g = '';
for (let k = 0; k < 8; k++) g += `<rect x="${3 * k}" y="0" width="2" height="${9 - k}" fill="#6b7a10"/><rect x="${3 * k}" y="${10 - k}" width="2" height="${3 + k}" fill="#a01c08"/>`;
document.getElementById('bars').innerHTML = g;
</script>
</body>
</html>
